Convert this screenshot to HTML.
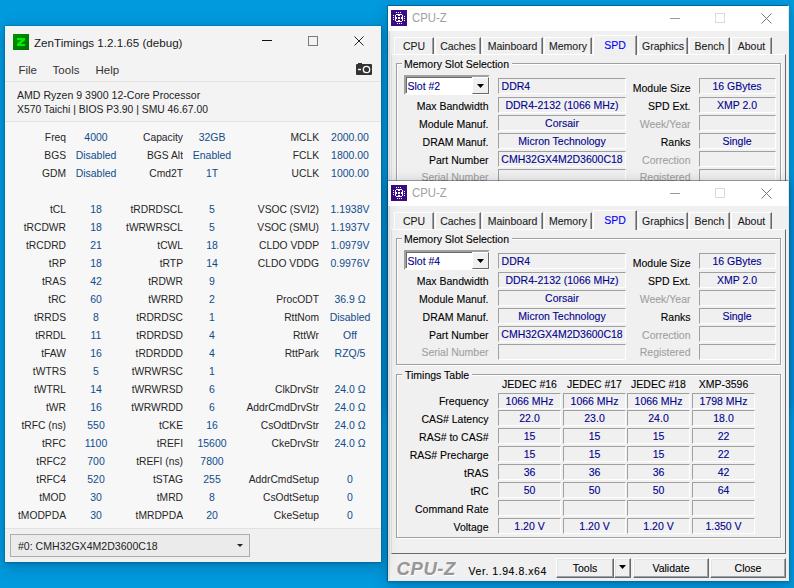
<!DOCTYPE html>
<html><head><meta charset="utf-8"><style>
html,body{margin:0;padding:0;}
body{width:794px;height:588px;overflow:hidden;position:relative;background:#009add;font-family:"Liberation Sans",sans-serif;}
.t{position:absolute;white-space:nowrap;line-height:14px;}
.r{position:absolute;}
.win{position:absolute;overflow:hidden;}
.win .t{-webkit-text-stroke:0.1px currentColor;}
.zt{position:absolute;}
</style></head><body>
<div class="r" style="left:388px;top:6px;width:401px;height:399px;box-shadow:0 4px 14px 1px rgba(0,30,70,0.26);"></div>
<div class="win" style="left:388px;top:5px;width:401px;height:176px;">
<div class="r" style="left:0px;top:0px;width:401px;height:401px;background:#f0f0f0;border-style:solid;border-width:1px 1px 1px 0;border-color:rgba(0,0,0,0.3) #e8e8e8 #e8e8e8 #e8e8e8;box-sizing:border-box;background-clip:padding-box;box-shadow:inset 1px 0 #e6e6e6, inset 2px 0 #dedede;"></div>
<div class="r" style="left:0px;top:1px;width:400px;height:25px;background:#fff;"></div>
<div class="r" style="left:3px;top:5px;width:16px;height:16px;background:#3b0f7e;"></div>
<svg class="r" style="left:3px;top:5px" width="16" height="16" shape-rendering="crispEdges"><rect width="16" height="16" fill="#3a0b82"/><g fill="#fff"><rect x="5" y="2" width="1" height="1"/><rect x="7" y="2" width="1" height="1"/><rect x="9" y="2" width="1" height="1"/><rect x="6" y="13" width="1" height="1"/><rect x="8" y="13" width="1" height="1"/><rect x="10" y="13" width="1" height="1"/><rect x="2" y="5" width="1" height="1"/><rect x="2" y="7" width="1" height="1"/><rect x="2" y="9" width="1" height="1"/><rect x="13" y="6" width="1" height="1"/><rect x="13" y="8" width="1" height="1"/><rect x="13" y="10" width="1" height="1"/><rect x="5" y="4" width="6" height="8"/><rect x="4" y="5" width="8" height="6"/></g><rect x="5" y="5" width="6" height="6" fill="#3a0b82"/><g fill="#fff"><rect x="7" y="5" width="2" height="1"/><rect x="7" y="10" width="2" height="1"/><rect x="5" y="7" width="1" height="2"/><rect x="10" y="7" width="1" height="2"/><rect x="7" y="7" width="2" height="2"/></g></svg>
<div class="t" style="left:24.30px;top:5.77px;font-size:12.2px;color:#a0a0a0;-webkit-text-stroke:0;transform:scaleX(0.93);transform-origin:0 50%;">CPU-Z</div>
<div class="r" style="left:282px;top:13px;width:10px;height:1px;background:#9a9a9a;"></div>
<div class="r" style="left:327px;top:8px;width:10px;height:10px;border:1px solid #dadada;box-sizing:border-box;"></div>
<svg class="r" style="left:373px;top:8px" width="11" height="11"><path d="M0.5 0.5L10.5 10.5M10.5 0.5L0.5 10.5" stroke="#777" stroke-width="1"/></svg>
<div class="r" style="left:3px;top:49px;width:395px;height:325px;border-style:solid;border-width:1px;border-color:#fff #696969 #696969 #e0e0e0;box-sizing:border-box;"></div>
<div class="r" style="left:6px;top:32px;width:40px;height:17px;background:#f0f0f0;border-style:solid;border-width:1px 1px 0 1px;border-color:#fff #696969 #fff #fff;box-sizing:border-box;box-shadow:inset -1px 0 0 #a0a0a0;"></div>
<div class="t" style="left:-4.00px;width:60px;text-align:center;top:34.36px;font-size:10.5px;color:#1c1c1c;">CPU</div>
<div class="r" style="left:47px;top:32px;width:46px;height:17px;background:#f0f0f0;border-style:solid;border-width:1px 1px 0 1px;border-color:#fff #696969 #fff #fff;box-sizing:border-box;box-shadow:inset -1px 0 0 #a0a0a0;"></div>
<div class="t" style="left:40.00px;width:60px;text-align:center;top:34.36px;font-size:10.5px;color:#1c1c1c;">Caches</div>
<div class="r" style="left:94px;top:32px;width:61px;height:17px;background:#f0f0f0;border-style:solid;border-width:1px 1px 0 1px;border-color:#fff #696969 #fff #fff;box-sizing:border-box;box-shadow:inset -1px 0 0 #a0a0a0;"></div>
<div class="t" style="left:94.50px;width:60px;text-align:center;top:34.36px;font-size:10.5px;color:#1c1c1c;">Mainboard</div>
<div class="r" style="left:156px;top:32px;width:48px;height:17px;background:#f0f0f0;border-style:solid;border-width:1px 1px 0 1px;border-color:#fff #696969 #fff #fff;box-sizing:border-box;box-shadow:inset -1px 0 0 #a0a0a0;"></div>
<div class="t" style="left:150.00px;width:60px;text-align:center;top:34.36px;font-size:10.5px;color:#1c1c1c;">Memory</div>
<div class="r" style="left:205px;top:30px;width:44px;height:20px;background:#f0f0f0;border-style:solid;border-width:1px 1px 0 1px;border-color:#fff #696969 #fff #fff;box-sizing:border-box;box-shadow:inset -1px 0 0 #a0a0a0;"></div>
<div class="t" style="left:197.00px;width:60px;text-align:center;top:33.36px;font-size:10.5px;color:#0000ff;">SPD</div>
<div class="r" style="left:250px;top:32px;width:50px;height:17px;background:#f0f0f0;border-style:solid;border-width:1px 1px 0 1px;border-color:#fff #696969 #fff #fff;box-sizing:border-box;box-shadow:inset -1px 0 0 #a0a0a0;"></div>
<div class="t" style="left:245.00px;width:60px;text-align:center;top:34.36px;font-size:10.5px;color:#1c1c1c;">Graphics</div>
<div class="r" style="left:301px;top:32px;width:41px;height:17px;background:#f0f0f0;border-style:solid;border-width:1px 1px 0 1px;border-color:#fff #696969 #fff #fff;box-sizing:border-box;box-shadow:inset -1px 0 0 #a0a0a0;"></div>
<div class="t" style="left:291.50px;width:60px;text-align:center;top:34.36px;font-size:10.5px;color:#1c1c1c;">Bench</div>
<div class="r" style="left:343px;top:32px;width:41px;height:17px;background:#f0f0f0;border-style:solid;border-width:1px 1px 0 1px;border-color:#fff #696969 #fff #fff;box-sizing:border-box;box-shadow:inset -1px 0 0 #a0a0a0;"></div>
<div class="t" style="left:333.50px;width:60px;text-align:center;top:34.36px;font-size:10.5px;color:#1c1c1c;">About</div>
<div class="r" style="left:8px;top:58px;width:385px;height:127px;border:1px solid #a0a0a0;box-sizing:border-box;box-shadow:inset 1px 1px 0 #fff, 1px 1px 0 #fff;"></div>
<div class="r" style="left:14px;top:53px;width:110px;height:12px;background:#f0f0f0;"></div>
<div class="t" style="left:16.00px;top:51.86px;font-size:10.5px;color:#000;">Memory Slot Selection</div>
<div class="r" style="left:16px;top:70px;width:86px;height:20px;background:#fff;border-style:solid;border-width:2px;border-color:#a0a0a0 #fff #fff #a0a0a0;box-sizing:border-box;box-shadow:inset 1px 1px 0 #696969;"></div>
<div class="r" style="left:84px;top:72px;width:17px;height:17px;background:#f0f0f0;border-style:solid;border-width:1px;border-color:#fff #696969 #696969 #fff;box-sizing:border-box;"></div>
<svg class="r" style="left:89px;top:79px" width="8" height="5"><path d="M0 0H7L3.5 4Z" fill="#000"/></svg>
<div class="t" style="left:19.50px;top:74.36px;font-size:10.5px;color:#00008c;">Slot #2</div>
<div class="r" style="left:110px;top:73px;width:128px;height:16px;border-style:solid;border-width:1px;border-color:#a0a0a0 #fff #fff #a0a0a0;box-sizing:border-box;"></div>
<div class="r" style="left:311px;top:73px;width:77px;height:16px;border-style:solid;border-width:1px;border-color:#a0a0a0 #fff #fff #a0a0a0;box-sizing:border-box;"></div>
<div class="t" style="left:202.50px;width:100px;text-align:right;top:76.36px;font-size:10.5px;color:#000;">Module Size</div>
<div class="t" style="left:113.60px;top:74.36px;font-size:10.5px;color:#00008c;">DDR4</div>
<div class="t" style="left:311.00px;width:76px;text-align:center;top:74.36px;font-size:10.5px;color:#00008c;">16 GBytes</div>
<div class="r" style="left:110px;top:92px;width:128px;height:16px;border-style:solid;border-width:1px;border-color:#a0a0a0 #fff #fff #a0a0a0;box-sizing:border-box;"></div>
<div class="r" style="left:311px;top:92px;width:77px;height:16px;border-style:solid;border-width:1px;border-color:#a0a0a0 #fff #fff #a0a0a0;box-sizing:border-box;"></div>
<div class="t" style="left:0.50px;width:100px;text-align:right;top:94.36px;font-size:10.5px;color:#000;">Max Bandwidth</div>
<div class="t" style="left:202.50px;width:100px;text-align:right;top:94.36px;font-size:10.5px;color:#000;">SPD Ext.</div>
<div class="t" style="left:110.00px;width:128px;text-align:center;top:93.36px;font-size:10.5px;color:#00008c;">DDR4-2132 (1066 MHz)</div>
<div class="t" style="left:311.00px;width:76px;text-align:center;top:93.36px;font-size:10.5px;color:#00008c;">XMP 2.0</div>
<div class="r" style="left:110px;top:110px;width:128px;height:16px;border-style:solid;border-width:1px;border-color:#a0a0a0 #fff #fff #a0a0a0;box-sizing:border-box;"></div>
<div class="r" style="left:311px;top:110px;width:77px;height:16px;border-style:solid;border-width:1px;border-color:#a0a0a0 #fff #fff #a0a0a0;box-sizing:border-box;"></div>
<div class="t" style="left:0.50px;width:100px;text-align:right;top:112.36px;font-size:10.5px;color:#000;">Module Manuf.</div>
<div class="t" style="left:202.50px;width:100px;text-align:right;top:112.36px;font-size:10.5px;color:#a0a0a0;">Week/Year</div>
<div class="t" style="left:110.00px;width:128px;text-align:center;top:111.36px;font-size:10.5px;color:#00008c;">Corsair</div>
<div class="r" style="left:110px;top:128px;width:128px;height:16px;border-style:solid;border-width:1px;border-color:#a0a0a0 #fff #fff #a0a0a0;box-sizing:border-box;"></div>
<div class="r" style="left:311px;top:128px;width:77px;height:16px;border-style:solid;border-width:1px;border-color:#a0a0a0 #fff #fff #a0a0a0;box-sizing:border-box;"></div>
<div class="t" style="left:0.50px;width:100px;text-align:right;top:130.36px;font-size:10.5px;color:#000;">DRAM Manuf.</div>
<div class="t" style="left:202.50px;width:100px;text-align:right;top:130.36px;font-size:10.5px;color:#000;">Ranks</div>
<div class="t" style="left:110.00px;width:128px;text-align:center;top:129.36px;font-size:10.5px;color:#00008c;">Micron Technology</div>
<div class="t" style="left:311.00px;width:76px;text-align:center;top:129.36px;font-size:10.5px;color:#00008c;">Single</div>
<div class="r" style="left:110px;top:146px;width:128px;height:16px;border-style:solid;border-width:1px;border-color:#a0a0a0 #fff #fff #a0a0a0;box-sizing:border-box;"></div>
<div class="r" style="left:311px;top:146px;width:77px;height:16px;border-style:solid;border-width:1px;border-color:#a0a0a0 #fff #fff #a0a0a0;box-sizing:border-box;"></div>
<div class="t" style="left:0.50px;width:100px;text-align:right;top:148.36px;font-size:10.5px;color:#000;">Part Number</div>
<div class="t" style="left:202.50px;width:100px;text-align:right;top:148.36px;font-size:10.5px;color:#a0a0a0;">Correction</div>
<div class="t" style="left:110.00px;width:128px;text-align:center;top:147.36px;font-size:10.5px;color:#00008c;">CMH32GX4M2D3600C18</div>
<div class="r" style="left:110px;top:164px;width:128px;height:16px;border-style:solid;border-width:1px;border-color:#a0a0a0 #fff #fff #a0a0a0;box-sizing:border-box;"></div>
<div class="r" style="left:311px;top:164px;width:77px;height:16px;border-style:solid;border-width:1px;border-color:#a0a0a0 #fff #fff #a0a0a0;box-sizing:border-box;"></div>
<div class="t" style="left:0.50px;width:100px;text-align:right;top:165.36px;font-size:10.5px;color:#a0a0a0;">Serial Number</div>
<div class="t" style="left:202.50px;width:100px;text-align:right;top:165.36px;font-size:10.5px;color:#a0a0a0;">Registered</div>
<div class="r" style="left:8px;top:194px;width:385px;height:164px;border:1px solid #a0a0a0;box-sizing:border-box;box-shadow:inset 1px 1px 0 #fff, 1px 1px 0 #fff;"></div>
<div class="r" style="left:14px;top:188px;width:70px;height:12px;background:#f0f0f0;"></div>
<div class="t" style="left:17.00px;top:187.96px;font-size:10.5px;color:#000;">Timings Table</div>
<div class="t" style="left:106.50px;width:70px;text-align:center;top:196.96px;font-size:10.5px;color:#000;">JEDEC #16</div>
<div class="t" style="left:171.50px;width:70px;text-align:center;top:196.96px;font-size:10.5px;color:#000;">JEDEC #17</div>
<div class="t" style="left:235.50px;width:70px;text-align:center;top:196.96px;font-size:10.5px;color:#000;">JEDEC #18</div>
<div class="t" style="left:300.50px;width:70px;text-align:center;top:196.96px;font-size:10.5px;color:#000;">XMP-3596</div>
<div class="t" style="left:0.50px;width:100px;text-align:right;top:214.36px;font-size:10.5px;color:#000;">Frequency</div>
<div class="r" style="left:110px;top:213px;width:63px;height:16px;border-style:solid;border-width:1px;border-color:#a0a0a0 #fff #fff #a0a0a0;box-sizing:border-box;"></div>
<div class="t" style="left:109.50px;width:64px;text-align:center;top:214.36px;font-size:10.5px;color:#00008c;">1066 MHz</div>
<div class="r" style="left:175px;top:213px;width:63px;height:16px;border-style:solid;border-width:1px;border-color:#a0a0a0 #fff #fff #a0a0a0;box-sizing:border-box;"></div>
<div class="t" style="left:174.50px;width:64px;text-align:center;top:214.36px;font-size:10.5px;color:#00008c;">1066 MHz</div>
<div class="r" style="left:239px;top:213px;width:63px;height:16px;border-style:solid;border-width:1px;border-color:#a0a0a0 #fff #fff #a0a0a0;box-sizing:border-box;"></div>
<div class="t" style="left:238.50px;width:64px;text-align:center;top:214.36px;font-size:10.5px;color:#00008c;">1066 MHz</div>
<div class="r" style="left:304px;top:213px;width:63px;height:16px;border-style:solid;border-width:1px;border-color:#a0a0a0 #fff #fff #a0a0a0;box-sizing:border-box;"></div>
<div class="t" style="left:303.50px;width:64px;text-align:center;top:214.36px;font-size:10.5px;color:#00008c;">1798 MHz</div>
<div class="t" style="left:0.50px;width:100px;text-align:right;top:232.36px;font-size:10.5px;color:#000;">CAS# Latency</div>
<div class="r" style="left:110px;top:230px;width:63px;height:16px;border-style:solid;border-width:1px;border-color:#a0a0a0 #fff #fff #a0a0a0;box-sizing:border-box;"></div>
<div class="t" style="left:109.50px;width:64px;text-align:center;top:231.36px;font-size:10.5px;color:#00008c;">22.0</div>
<div class="r" style="left:175px;top:230px;width:63px;height:16px;border-style:solid;border-width:1px;border-color:#a0a0a0 #fff #fff #a0a0a0;box-sizing:border-box;"></div>
<div class="t" style="left:174.50px;width:64px;text-align:center;top:231.36px;font-size:10.5px;color:#00008c;">23.0</div>
<div class="r" style="left:239px;top:230px;width:63px;height:16px;border-style:solid;border-width:1px;border-color:#a0a0a0 #fff #fff #a0a0a0;box-sizing:border-box;"></div>
<div class="t" style="left:238.50px;width:64px;text-align:center;top:231.36px;font-size:10.5px;color:#00008c;">24.0</div>
<div class="r" style="left:304px;top:230px;width:63px;height:16px;border-style:solid;border-width:1px;border-color:#a0a0a0 #fff #fff #a0a0a0;box-sizing:border-box;"></div>
<div class="t" style="left:303.50px;width:64px;text-align:center;top:231.36px;font-size:10.5px;color:#00008c;">18.0</div>
<div class="t" style="left:0.50px;width:100px;text-align:right;top:250.36px;font-size:10.5px;color:#000;">RAS# to CAS#</div>
<div class="r" style="left:110px;top:248px;width:63px;height:16px;border-style:solid;border-width:1px;border-color:#a0a0a0 #fff #fff #a0a0a0;box-sizing:border-box;"></div>
<div class="t" style="left:109.50px;width:64px;text-align:center;top:249.36px;font-size:10.5px;color:#00008c;">15</div>
<div class="r" style="left:175px;top:248px;width:63px;height:16px;border-style:solid;border-width:1px;border-color:#a0a0a0 #fff #fff #a0a0a0;box-sizing:border-box;"></div>
<div class="t" style="left:174.50px;width:64px;text-align:center;top:249.36px;font-size:10.5px;color:#00008c;">15</div>
<div class="r" style="left:239px;top:248px;width:63px;height:16px;border-style:solid;border-width:1px;border-color:#a0a0a0 #fff #fff #a0a0a0;box-sizing:border-box;"></div>
<div class="t" style="left:238.50px;width:64px;text-align:center;top:249.36px;font-size:10.5px;color:#00008c;">15</div>
<div class="r" style="left:304px;top:248px;width:63px;height:16px;border-style:solid;border-width:1px;border-color:#a0a0a0 #fff #fff #a0a0a0;box-sizing:border-box;"></div>
<div class="t" style="left:303.50px;width:64px;text-align:center;top:249.36px;font-size:10.5px;color:#00008c;">22</div>
<div class="t" style="left:0.50px;width:100px;text-align:right;top:268.36px;font-size:10.5px;color:#000;">RAS# Precharge</div>
<div class="r" style="left:110px;top:266px;width:63px;height:16px;border-style:solid;border-width:1px;border-color:#a0a0a0 #fff #fff #a0a0a0;box-sizing:border-box;"></div>
<div class="t" style="left:109.50px;width:64px;text-align:center;top:267.36px;font-size:10.5px;color:#00008c;">15</div>
<div class="r" style="left:175px;top:266px;width:63px;height:16px;border-style:solid;border-width:1px;border-color:#a0a0a0 #fff #fff #a0a0a0;box-sizing:border-box;"></div>
<div class="t" style="left:174.50px;width:64px;text-align:center;top:267.36px;font-size:10.5px;color:#00008c;">15</div>
<div class="r" style="left:239px;top:266px;width:63px;height:16px;border-style:solid;border-width:1px;border-color:#a0a0a0 #fff #fff #a0a0a0;box-sizing:border-box;"></div>
<div class="t" style="left:238.50px;width:64px;text-align:center;top:267.36px;font-size:10.5px;color:#00008c;">15</div>
<div class="r" style="left:304px;top:266px;width:63px;height:16px;border-style:solid;border-width:1px;border-color:#a0a0a0 #fff #fff #a0a0a0;box-sizing:border-box;"></div>
<div class="t" style="left:303.50px;width:64px;text-align:center;top:267.36px;font-size:10.5px;color:#00008c;">22</div>
<div class="t" style="left:0.50px;width:100px;text-align:right;top:286.36px;font-size:10.5px;color:#000;">tRAS</div>
<div class="r" style="left:110px;top:284px;width:63px;height:16px;border-style:solid;border-width:1px;border-color:#a0a0a0 #fff #fff #a0a0a0;box-sizing:border-box;"></div>
<div class="t" style="left:109.50px;width:64px;text-align:center;top:285.36px;font-size:10.5px;color:#00008c;">36</div>
<div class="r" style="left:175px;top:284px;width:63px;height:16px;border-style:solid;border-width:1px;border-color:#a0a0a0 #fff #fff #a0a0a0;box-sizing:border-box;"></div>
<div class="t" style="left:174.50px;width:64px;text-align:center;top:285.36px;font-size:10.5px;color:#00008c;">36</div>
<div class="r" style="left:239px;top:284px;width:63px;height:16px;border-style:solid;border-width:1px;border-color:#a0a0a0 #fff #fff #a0a0a0;box-sizing:border-box;"></div>
<div class="t" style="left:238.50px;width:64px;text-align:center;top:285.36px;font-size:10.5px;color:#00008c;">36</div>
<div class="r" style="left:304px;top:284px;width:63px;height:16px;border-style:solid;border-width:1px;border-color:#a0a0a0 #fff #fff #a0a0a0;box-sizing:border-box;"></div>
<div class="t" style="left:303.50px;width:64px;text-align:center;top:285.36px;font-size:10.5px;color:#00008c;">42</div>
<div class="t" style="left:0.50px;width:100px;text-align:right;top:304.36px;font-size:10.5px;color:#000;">tRC</div>
<div class="r" style="left:110px;top:302px;width:63px;height:16px;border-style:solid;border-width:1px;border-color:#a0a0a0 #fff #fff #a0a0a0;box-sizing:border-box;"></div>
<div class="t" style="left:109.50px;width:64px;text-align:center;top:303.36px;font-size:10.5px;color:#00008c;">50</div>
<div class="r" style="left:175px;top:302px;width:63px;height:16px;border-style:solid;border-width:1px;border-color:#a0a0a0 #fff #fff #a0a0a0;box-sizing:border-box;"></div>
<div class="t" style="left:174.50px;width:64px;text-align:center;top:303.36px;font-size:10.5px;color:#00008c;">50</div>
<div class="r" style="left:239px;top:302px;width:63px;height:16px;border-style:solid;border-width:1px;border-color:#a0a0a0 #fff #fff #a0a0a0;box-sizing:border-box;"></div>
<div class="t" style="left:238.50px;width:64px;text-align:center;top:303.36px;font-size:10.5px;color:#00008c;">50</div>
<div class="r" style="left:304px;top:302px;width:63px;height:16px;border-style:solid;border-width:1px;border-color:#a0a0a0 #fff #fff #a0a0a0;box-sizing:border-box;"></div>
<div class="t" style="left:303.50px;width:64px;text-align:center;top:303.36px;font-size:10.5px;color:#00008c;">64</div>
<div class="t" style="left:0.50px;width:100px;text-align:right;top:322.36px;font-size:10.5px;color:#000;">Command Rate</div>
<div class="r" style="left:110px;top:320px;width:63px;height:16px;border-style:solid;border-width:1px;border-color:#a0a0a0 #fff #fff #a0a0a0;box-sizing:border-box;"></div>
<div class="r" style="left:175px;top:320px;width:63px;height:16px;border-style:solid;border-width:1px;border-color:#a0a0a0 #fff #fff #a0a0a0;box-sizing:border-box;"></div>
<div class="r" style="left:239px;top:320px;width:63px;height:16px;border-style:solid;border-width:1px;border-color:#a0a0a0 #fff #fff #a0a0a0;box-sizing:border-box;"></div>
<div class="r" style="left:304px;top:320px;width:63px;height:16px;border-style:solid;border-width:1px;border-color:#a0a0a0 #fff #fff #a0a0a0;box-sizing:border-box;"></div>
<div class="t" style="left:0.50px;width:100px;text-align:right;top:340.36px;font-size:10.5px;color:#000;">Voltage</div>
<div class="r" style="left:110px;top:338px;width:63px;height:16px;border-style:solid;border-width:1px;border-color:#a0a0a0 #fff #fff #a0a0a0;box-sizing:border-box;"></div>
<div class="t" style="left:109.50px;width:64px;text-align:center;top:339.36px;font-size:10.5px;color:#00008c;">1.20 V</div>
<div class="r" style="left:175px;top:338px;width:63px;height:16px;border-style:solid;border-width:1px;border-color:#a0a0a0 #fff #fff #a0a0a0;box-sizing:border-box;"></div>
<div class="t" style="left:174.50px;width:64px;text-align:center;top:339.36px;font-size:10.5px;color:#00008c;">1.20 V</div>
<div class="r" style="left:239px;top:338px;width:63px;height:16px;border-style:solid;border-width:1px;border-color:#a0a0a0 #fff #fff #a0a0a0;box-sizing:border-box;"></div>
<div class="t" style="left:238.50px;width:64px;text-align:center;top:339.36px;font-size:10.5px;color:#00008c;">1.20 V</div>
<div class="r" style="left:304px;top:338px;width:63px;height:16px;border-style:solid;border-width:1px;border-color:#a0a0a0 #fff #fff #a0a0a0;box-sizing:border-box;"></div>
<div class="t" style="left:303.50px;width:64px;text-align:center;top:339.36px;font-size:10.5px;color:#00008c;">1.350 V</div>
<div class="t" style="left:8.50px;top:381.59px;font-size:18.5px;color:#979797;letter-spacing:0.6px;text-shadow:1px 1px 0 #fff;"><i><b>CPU-Z</b></i></div>
<div class="t" style="left:80.60px;top:384.16px;font-size:10.5px;color:#000;letter-spacing:0.55px;">Ver. 1.94.8.x64</div>
<div class="r" style="left:168px;top:378px;width:58px;height:20px;background:#f0f0f0;border-style:solid;border-width:1px;border-color:#fff #696969 #696969 #fff;box-sizing:border-box;box-shadow:inset -1px -1px 0 #a0a0a0, inset 1px 1px 0 #e3e3e3;"></div>
<div class="r" style="left:226px;top:378px;width:17px;height:20px;background:#f0f0f0;border-style:solid;border-width:1px;border-color:#fff #696969 #696969 #fff;box-sizing:border-box;box-shadow:inset -1px -1px 0 #a0a0a0, inset 1px 1px 0 #e3e3e3;"></div>
<svg class="r" style="left:231px;top:385px" width="8" height="5"><path d="M0 0H7L3.5 4Z" fill="#000"/></svg>
<div class="t" style="left:167.00px;width:60px;text-align:center;top:381.36px;font-size:10.5px;color:#000;">Tools</div>
<div class="r" style="left:245px;top:378px;width:76px;height:20px;background:#f0f0f0;border-style:solid;border-width:1px;border-color:#fff #696969 #696969 #fff;box-sizing:border-box;box-shadow:inset -1px -1px 0 #a0a0a0, inset 1px 1px 0 #e3e3e3;"></div>
<div class="t" style="left:245.00px;width:76px;text-align:center;top:381.36px;font-size:10.5px;color:#000;">Validate</div>
<div class="r" style="left:322px;top:378px;width:76px;height:20px;background:#f0f0f0;border-style:solid;border-width:1px;border-color:#fff #696969 #696969 #fff;box-sizing:border-box;box-shadow:inset -1px -1px 0 #a0a0a0, inset 1px 1px 0 #e3e3e3;"></div>
<div class="t" style="left:322.00px;width:76px;text-align:center;top:381.36px;font-size:10.5px;color:#000;">Close</div>
</div>
<div class="r" style="left:388px;top:181px;width:401px;height:400px;box-shadow:0 4px 14px 1px rgba(0,30,70,0.26), 0 1px 3px rgba(0,20,50,0.25);"></div>
<div class="win" style="left:388px;top:180px;width:401px;height:401px;">
<div class="r" style="left:0px;top:0px;width:401px;height:401px;background:#f0f0f0;border-style:solid;border-width:1px 1px 1px 0;border-color:rgba(0,0,0,0.3) #e8e8e8 #e8e8e8 #e8e8e8;box-sizing:border-box;background-clip:padding-box;box-shadow:inset 1px 0 #e6e6e6, inset 2px 0 #dedede;"></div>
<div class="r" style="left:0px;top:1px;width:400px;height:25px;background:#fff;"></div>
<div class="r" style="left:3px;top:5px;width:16px;height:16px;background:#3b0f7e;"></div>
<svg class="r" style="left:3px;top:5px" width="16" height="16" shape-rendering="crispEdges"><rect width="16" height="16" fill="#3a0b82"/><g fill="#fff"><rect x="5" y="2" width="1" height="1"/><rect x="7" y="2" width="1" height="1"/><rect x="9" y="2" width="1" height="1"/><rect x="6" y="13" width="1" height="1"/><rect x="8" y="13" width="1" height="1"/><rect x="10" y="13" width="1" height="1"/><rect x="2" y="5" width="1" height="1"/><rect x="2" y="7" width="1" height="1"/><rect x="2" y="9" width="1" height="1"/><rect x="13" y="6" width="1" height="1"/><rect x="13" y="8" width="1" height="1"/><rect x="13" y="10" width="1" height="1"/><rect x="5" y="4" width="6" height="8"/><rect x="4" y="5" width="8" height="6"/></g><rect x="5" y="5" width="6" height="6" fill="#3a0b82"/><g fill="#fff"><rect x="7" y="5" width="2" height="1"/><rect x="7" y="10" width="2" height="1"/><rect x="5" y="7" width="1" height="2"/><rect x="10" y="7" width="1" height="2"/><rect x="7" y="7" width="2" height="2"/></g></svg>
<div class="t" style="left:24.30px;top:5.77px;font-size:12.2px;color:#a0a0a0;-webkit-text-stroke:0;transform:scaleX(0.93);transform-origin:0 50%;">CPU-Z</div>
<div class="r" style="left:282px;top:13px;width:10px;height:1px;background:#9a9a9a;"></div>
<div class="r" style="left:327px;top:8px;width:10px;height:10px;border:1px solid #dadada;box-sizing:border-box;"></div>
<svg class="r" style="left:373px;top:8px" width="11" height="11"><path d="M0.5 0.5L10.5 10.5M10.5 0.5L0.5 10.5" stroke="#777" stroke-width="1"/></svg>
<div class="r" style="left:3px;top:49px;width:395px;height:325px;border-style:solid;border-width:1px;border-color:#fff #696969 #696969 #e0e0e0;box-sizing:border-box;"></div>
<div class="r" style="left:6px;top:32px;width:40px;height:17px;background:#f0f0f0;border-style:solid;border-width:1px 1px 0 1px;border-color:#fff #696969 #fff #fff;box-sizing:border-box;box-shadow:inset -1px 0 0 #a0a0a0;"></div>
<div class="t" style="left:-4.00px;width:60px;text-align:center;top:34.36px;font-size:10.5px;color:#1c1c1c;">CPU</div>
<div class="r" style="left:47px;top:32px;width:46px;height:17px;background:#f0f0f0;border-style:solid;border-width:1px 1px 0 1px;border-color:#fff #696969 #fff #fff;box-sizing:border-box;box-shadow:inset -1px 0 0 #a0a0a0;"></div>
<div class="t" style="left:40.00px;width:60px;text-align:center;top:34.36px;font-size:10.5px;color:#1c1c1c;">Caches</div>
<div class="r" style="left:94px;top:32px;width:61px;height:17px;background:#f0f0f0;border-style:solid;border-width:1px 1px 0 1px;border-color:#fff #696969 #fff #fff;box-sizing:border-box;box-shadow:inset -1px 0 0 #a0a0a0;"></div>
<div class="t" style="left:94.50px;width:60px;text-align:center;top:34.36px;font-size:10.5px;color:#1c1c1c;">Mainboard</div>
<div class="r" style="left:156px;top:32px;width:48px;height:17px;background:#f0f0f0;border-style:solid;border-width:1px 1px 0 1px;border-color:#fff #696969 #fff #fff;box-sizing:border-box;box-shadow:inset -1px 0 0 #a0a0a0;"></div>
<div class="t" style="left:150.00px;width:60px;text-align:center;top:34.36px;font-size:10.5px;color:#1c1c1c;">Memory</div>
<div class="r" style="left:205px;top:30px;width:44px;height:20px;background:#f0f0f0;border-style:solid;border-width:1px 1px 0 1px;border-color:#fff #696969 #fff #fff;box-sizing:border-box;box-shadow:inset -1px 0 0 #a0a0a0;"></div>
<div class="t" style="left:197.00px;width:60px;text-align:center;top:33.36px;font-size:10.5px;color:#0000ff;">SPD</div>
<div class="r" style="left:250px;top:32px;width:50px;height:17px;background:#f0f0f0;border-style:solid;border-width:1px 1px 0 1px;border-color:#fff #696969 #fff #fff;box-sizing:border-box;box-shadow:inset -1px 0 0 #a0a0a0;"></div>
<div class="t" style="left:245.00px;width:60px;text-align:center;top:34.36px;font-size:10.5px;color:#1c1c1c;">Graphics</div>
<div class="r" style="left:301px;top:32px;width:41px;height:17px;background:#f0f0f0;border-style:solid;border-width:1px 1px 0 1px;border-color:#fff #696969 #fff #fff;box-sizing:border-box;box-shadow:inset -1px 0 0 #a0a0a0;"></div>
<div class="t" style="left:291.50px;width:60px;text-align:center;top:34.36px;font-size:10.5px;color:#1c1c1c;">Bench</div>
<div class="r" style="left:343px;top:32px;width:41px;height:17px;background:#f0f0f0;border-style:solid;border-width:1px 1px 0 1px;border-color:#fff #696969 #fff #fff;box-sizing:border-box;box-shadow:inset -1px 0 0 #a0a0a0;"></div>
<div class="t" style="left:333.50px;width:60px;text-align:center;top:34.36px;font-size:10.5px;color:#1c1c1c;">About</div>
<div class="r" style="left:8px;top:58px;width:385px;height:127px;border:1px solid #a0a0a0;box-sizing:border-box;box-shadow:inset 1px 1px 0 #fff, 1px 1px 0 #fff;"></div>
<div class="r" style="left:14px;top:53px;width:110px;height:12px;background:#f0f0f0;"></div>
<div class="t" style="left:16.00px;top:51.86px;font-size:10.5px;color:#000;">Memory Slot Selection</div>
<div class="r" style="left:16px;top:70px;width:86px;height:20px;background:#fff;border-style:solid;border-width:2px;border-color:#a0a0a0 #fff #fff #a0a0a0;box-sizing:border-box;box-shadow:inset 1px 1px 0 #696969;"></div>
<div class="r" style="left:84px;top:72px;width:17px;height:17px;background:#f0f0f0;border-style:solid;border-width:1px;border-color:#fff #696969 #696969 #fff;box-sizing:border-box;"></div>
<svg class="r" style="left:89px;top:79px" width="8" height="5"><path d="M0 0H7L3.5 4Z" fill="#000"/></svg>
<div class="t" style="left:19.50px;top:74.36px;font-size:10.5px;color:#00008c;">Slot #4</div>
<div class="r" style="left:110px;top:73px;width:128px;height:16px;border-style:solid;border-width:1px;border-color:#a0a0a0 #fff #fff #a0a0a0;box-sizing:border-box;"></div>
<div class="r" style="left:311px;top:73px;width:77px;height:16px;border-style:solid;border-width:1px;border-color:#a0a0a0 #fff #fff #a0a0a0;box-sizing:border-box;"></div>
<div class="t" style="left:202.50px;width:100px;text-align:right;top:76.36px;font-size:10.5px;color:#000;">Module Size</div>
<div class="t" style="left:113.60px;top:74.36px;font-size:10.5px;color:#00008c;">DDR4</div>
<div class="t" style="left:311.00px;width:76px;text-align:center;top:74.36px;font-size:10.5px;color:#00008c;">16 GBytes</div>
<div class="r" style="left:110px;top:92px;width:128px;height:16px;border-style:solid;border-width:1px;border-color:#a0a0a0 #fff #fff #a0a0a0;box-sizing:border-box;"></div>
<div class="r" style="left:311px;top:92px;width:77px;height:16px;border-style:solid;border-width:1px;border-color:#a0a0a0 #fff #fff #a0a0a0;box-sizing:border-box;"></div>
<div class="t" style="left:0.50px;width:100px;text-align:right;top:94.36px;font-size:10.5px;color:#000;">Max Bandwidth</div>
<div class="t" style="left:202.50px;width:100px;text-align:right;top:94.36px;font-size:10.5px;color:#000;">SPD Ext.</div>
<div class="t" style="left:110.00px;width:128px;text-align:center;top:93.36px;font-size:10.5px;color:#00008c;">DDR4-2132 (1066 MHz)</div>
<div class="t" style="left:311.00px;width:76px;text-align:center;top:93.36px;font-size:10.5px;color:#00008c;">XMP 2.0</div>
<div class="r" style="left:110px;top:110px;width:128px;height:16px;border-style:solid;border-width:1px;border-color:#a0a0a0 #fff #fff #a0a0a0;box-sizing:border-box;"></div>
<div class="r" style="left:311px;top:110px;width:77px;height:16px;border-style:solid;border-width:1px;border-color:#a0a0a0 #fff #fff #a0a0a0;box-sizing:border-box;"></div>
<div class="t" style="left:0.50px;width:100px;text-align:right;top:112.36px;font-size:10.5px;color:#000;">Module Manuf.</div>
<div class="t" style="left:202.50px;width:100px;text-align:right;top:112.36px;font-size:10.5px;color:#a0a0a0;">Week/Year</div>
<div class="t" style="left:110.00px;width:128px;text-align:center;top:111.36px;font-size:10.5px;color:#00008c;">Corsair</div>
<div class="r" style="left:110px;top:128px;width:128px;height:16px;border-style:solid;border-width:1px;border-color:#a0a0a0 #fff #fff #a0a0a0;box-sizing:border-box;"></div>
<div class="r" style="left:311px;top:128px;width:77px;height:16px;border-style:solid;border-width:1px;border-color:#a0a0a0 #fff #fff #a0a0a0;box-sizing:border-box;"></div>
<div class="t" style="left:0.50px;width:100px;text-align:right;top:130.36px;font-size:10.5px;color:#000;">DRAM Manuf.</div>
<div class="t" style="left:202.50px;width:100px;text-align:right;top:130.36px;font-size:10.5px;color:#000;">Ranks</div>
<div class="t" style="left:110.00px;width:128px;text-align:center;top:129.36px;font-size:10.5px;color:#00008c;">Micron Technology</div>
<div class="t" style="left:311.00px;width:76px;text-align:center;top:129.36px;font-size:10.5px;color:#00008c;">Single</div>
<div class="r" style="left:110px;top:146px;width:128px;height:16px;border-style:solid;border-width:1px;border-color:#a0a0a0 #fff #fff #a0a0a0;box-sizing:border-box;"></div>
<div class="r" style="left:311px;top:146px;width:77px;height:16px;border-style:solid;border-width:1px;border-color:#a0a0a0 #fff #fff #a0a0a0;box-sizing:border-box;"></div>
<div class="t" style="left:0.50px;width:100px;text-align:right;top:148.36px;font-size:10.5px;color:#000;">Part Number</div>
<div class="t" style="left:202.50px;width:100px;text-align:right;top:148.36px;font-size:10.5px;color:#a0a0a0;">Correction</div>
<div class="t" style="left:110.00px;width:128px;text-align:center;top:147.36px;font-size:10.5px;color:#00008c;">CMH32GX4M2D3600C18</div>
<div class="r" style="left:110px;top:164px;width:128px;height:16px;border-style:solid;border-width:1px;border-color:#a0a0a0 #fff #fff #a0a0a0;box-sizing:border-box;"></div>
<div class="r" style="left:311px;top:164px;width:77px;height:16px;border-style:solid;border-width:1px;border-color:#a0a0a0 #fff #fff #a0a0a0;box-sizing:border-box;"></div>
<div class="t" style="left:0.50px;width:100px;text-align:right;top:165.36px;font-size:10.5px;color:#a0a0a0;">Serial Number</div>
<div class="t" style="left:202.50px;width:100px;text-align:right;top:165.36px;font-size:10.5px;color:#a0a0a0;">Registered</div>
<div class="r" style="left:8px;top:194px;width:385px;height:164px;border:1px solid #a0a0a0;box-sizing:border-box;box-shadow:inset 1px 1px 0 #fff, 1px 1px 0 #fff;"></div>
<div class="r" style="left:14px;top:188px;width:70px;height:12px;background:#f0f0f0;"></div>
<div class="t" style="left:17.00px;top:187.96px;font-size:10.5px;color:#000;">Timings Table</div>
<div class="t" style="left:106.50px;width:70px;text-align:center;top:196.96px;font-size:10.5px;color:#000;">JEDEC #16</div>
<div class="t" style="left:171.50px;width:70px;text-align:center;top:196.96px;font-size:10.5px;color:#000;">JEDEC #17</div>
<div class="t" style="left:235.50px;width:70px;text-align:center;top:196.96px;font-size:10.5px;color:#000;">JEDEC #18</div>
<div class="t" style="left:300.50px;width:70px;text-align:center;top:196.96px;font-size:10.5px;color:#000;">XMP-3596</div>
<div class="t" style="left:0.50px;width:100px;text-align:right;top:214.36px;font-size:10.5px;color:#000;">Frequency</div>
<div class="r" style="left:110px;top:213px;width:63px;height:16px;border-style:solid;border-width:1px;border-color:#a0a0a0 #fff #fff #a0a0a0;box-sizing:border-box;"></div>
<div class="t" style="left:109.50px;width:64px;text-align:center;top:214.36px;font-size:10.5px;color:#00008c;">1066 MHz</div>
<div class="r" style="left:175px;top:213px;width:63px;height:16px;border-style:solid;border-width:1px;border-color:#a0a0a0 #fff #fff #a0a0a0;box-sizing:border-box;"></div>
<div class="t" style="left:174.50px;width:64px;text-align:center;top:214.36px;font-size:10.5px;color:#00008c;">1066 MHz</div>
<div class="r" style="left:239px;top:213px;width:63px;height:16px;border-style:solid;border-width:1px;border-color:#a0a0a0 #fff #fff #a0a0a0;box-sizing:border-box;"></div>
<div class="t" style="left:238.50px;width:64px;text-align:center;top:214.36px;font-size:10.5px;color:#00008c;">1066 MHz</div>
<div class="r" style="left:304px;top:213px;width:63px;height:16px;border-style:solid;border-width:1px;border-color:#a0a0a0 #fff #fff #a0a0a0;box-sizing:border-box;"></div>
<div class="t" style="left:303.50px;width:64px;text-align:center;top:214.36px;font-size:10.5px;color:#00008c;">1798 MHz</div>
<div class="t" style="left:0.50px;width:100px;text-align:right;top:232.36px;font-size:10.5px;color:#000;">CAS# Latency</div>
<div class="r" style="left:110px;top:230px;width:63px;height:16px;border-style:solid;border-width:1px;border-color:#a0a0a0 #fff #fff #a0a0a0;box-sizing:border-box;"></div>
<div class="t" style="left:109.50px;width:64px;text-align:center;top:231.36px;font-size:10.5px;color:#00008c;">22.0</div>
<div class="r" style="left:175px;top:230px;width:63px;height:16px;border-style:solid;border-width:1px;border-color:#a0a0a0 #fff #fff #a0a0a0;box-sizing:border-box;"></div>
<div class="t" style="left:174.50px;width:64px;text-align:center;top:231.36px;font-size:10.5px;color:#00008c;">23.0</div>
<div class="r" style="left:239px;top:230px;width:63px;height:16px;border-style:solid;border-width:1px;border-color:#a0a0a0 #fff #fff #a0a0a0;box-sizing:border-box;"></div>
<div class="t" style="left:238.50px;width:64px;text-align:center;top:231.36px;font-size:10.5px;color:#00008c;">24.0</div>
<div class="r" style="left:304px;top:230px;width:63px;height:16px;border-style:solid;border-width:1px;border-color:#a0a0a0 #fff #fff #a0a0a0;box-sizing:border-box;"></div>
<div class="t" style="left:303.50px;width:64px;text-align:center;top:231.36px;font-size:10.5px;color:#00008c;">18.0</div>
<div class="t" style="left:0.50px;width:100px;text-align:right;top:250.36px;font-size:10.5px;color:#000;">RAS# to CAS#</div>
<div class="r" style="left:110px;top:248px;width:63px;height:16px;border-style:solid;border-width:1px;border-color:#a0a0a0 #fff #fff #a0a0a0;box-sizing:border-box;"></div>
<div class="t" style="left:109.50px;width:64px;text-align:center;top:249.36px;font-size:10.5px;color:#00008c;">15</div>
<div class="r" style="left:175px;top:248px;width:63px;height:16px;border-style:solid;border-width:1px;border-color:#a0a0a0 #fff #fff #a0a0a0;box-sizing:border-box;"></div>
<div class="t" style="left:174.50px;width:64px;text-align:center;top:249.36px;font-size:10.5px;color:#00008c;">15</div>
<div class="r" style="left:239px;top:248px;width:63px;height:16px;border-style:solid;border-width:1px;border-color:#a0a0a0 #fff #fff #a0a0a0;box-sizing:border-box;"></div>
<div class="t" style="left:238.50px;width:64px;text-align:center;top:249.36px;font-size:10.5px;color:#00008c;">15</div>
<div class="r" style="left:304px;top:248px;width:63px;height:16px;border-style:solid;border-width:1px;border-color:#a0a0a0 #fff #fff #a0a0a0;box-sizing:border-box;"></div>
<div class="t" style="left:303.50px;width:64px;text-align:center;top:249.36px;font-size:10.5px;color:#00008c;">22</div>
<div class="t" style="left:0.50px;width:100px;text-align:right;top:268.36px;font-size:10.5px;color:#000;">RAS# Precharge</div>
<div class="r" style="left:110px;top:266px;width:63px;height:16px;border-style:solid;border-width:1px;border-color:#a0a0a0 #fff #fff #a0a0a0;box-sizing:border-box;"></div>
<div class="t" style="left:109.50px;width:64px;text-align:center;top:267.36px;font-size:10.5px;color:#00008c;">15</div>
<div class="r" style="left:175px;top:266px;width:63px;height:16px;border-style:solid;border-width:1px;border-color:#a0a0a0 #fff #fff #a0a0a0;box-sizing:border-box;"></div>
<div class="t" style="left:174.50px;width:64px;text-align:center;top:267.36px;font-size:10.5px;color:#00008c;">15</div>
<div class="r" style="left:239px;top:266px;width:63px;height:16px;border-style:solid;border-width:1px;border-color:#a0a0a0 #fff #fff #a0a0a0;box-sizing:border-box;"></div>
<div class="t" style="left:238.50px;width:64px;text-align:center;top:267.36px;font-size:10.5px;color:#00008c;">15</div>
<div class="r" style="left:304px;top:266px;width:63px;height:16px;border-style:solid;border-width:1px;border-color:#a0a0a0 #fff #fff #a0a0a0;box-sizing:border-box;"></div>
<div class="t" style="left:303.50px;width:64px;text-align:center;top:267.36px;font-size:10.5px;color:#00008c;">22</div>
<div class="t" style="left:0.50px;width:100px;text-align:right;top:286.36px;font-size:10.5px;color:#000;">tRAS</div>
<div class="r" style="left:110px;top:284px;width:63px;height:16px;border-style:solid;border-width:1px;border-color:#a0a0a0 #fff #fff #a0a0a0;box-sizing:border-box;"></div>
<div class="t" style="left:109.50px;width:64px;text-align:center;top:285.36px;font-size:10.5px;color:#00008c;">36</div>
<div class="r" style="left:175px;top:284px;width:63px;height:16px;border-style:solid;border-width:1px;border-color:#a0a0a0 #fff #fff #a0a0a0;box-sizing:border-box;"></div>
<div class="t" style="left:174.50px;width:64px;text-align:center;top:285.36px;font-size:10.5px;color:#00008c;">36</div>
<div class="r" style="left:239px;top:284px;width:63px;height:16px;border-style:solid;border-width:1px;border-color:#a0a0a0 #fff #fff #a0a0a0;box-sizing:border-box;"></div>
<div class="t" style="left:238.50px;width:64px;text-align:center;top:285.36px;font-size:10.5px;color:#00008c;">36</div>
<div class="r" style="left:304px;top:284px;width:63px;height:16px;border-style:solid;border-width:1px;border-color:#a0a0a0 #fff #fff #a0a0a0;box-sizing:border-box;"></div>
<div class="t" style="left:303.50px;width:64px;text-align:center;top:285.36px;font-size:10.5px;color:#00008c;">42</div>
<div class="t" style="left:0.50px;width:100px;text-align:right;top:304.36px;font-size:10.5px;color:#000;">tRC</div>
<div class="r" style="left:110px;top:302px;width:63px;height:16px;border-style:solid;border-width:1px;border-color:#a0a0a0 #fff #fff #a0a0a0;box-sizing:border-box;"></div>
<div class="t" style="left:109.50px;width:64px;text-align:center;top:303.36px;font-size:10.5px;color:#00008c;">50</div>
<div class="r" style="left:175px;top:302px;width:63px;height:16px;border-style:solid;border-width:1px;border-color:#a0a0a0 #fff #fff #a0a0a0;box-sizing:border-box;"></div>
<div class="t" style="left:174.50px;width:64px;text-align:center;top:303.36px;font-size:10.5px;color:#00008c;">50</div>
<div class="r" style="left:239px;top:302px;width:63px;height:16px;border-style:solid;border-width:1px;border-color:#a0a0a0 #fff #fff #a0a0a0;box-sizing:border-box;"></div>
<div class="t" style="left:238.50px;width:64px;text-align:center;top:303.36px;font-size:10.5px;color:#00008c;">50</div>
<div class="r" style="left:304px;top:302px;width:63px;height:16px;border-style:solid;border-width:1px;border-color:#a0a0a0 #fff #fff #a0a0a0;box-sizing:border-box;"></div>
<div class="t" style="left:303.50px;width:64px;text-align:center;top:303.36px;font-size:10.5px;color:#00008c;">64</div>
<div class="t" style="left:0.50px;width:100px;text-align:right;top:322.36px;font-size:10.5px;color:#000;">Command Rate</div>
<div class="r" style="left:110px;top:320px;width:63px;height:16px;border-style:solid;border-width:1px;border-color:#a0a0a0 #fff #fff #a0a0a0;box-sizing:border-box;"></div>
<div class="r" style="left:175px;top:320px;width:63px;height:16px;border-style:solid;border-width:1px;border-color:#a0a0a0 #fff #fff #a0a0a0;box-sizing:border-box;"></div>
<div class="r" style="left:239px;top:320px;width:63px;height:16px;border-style:solid;border-width:1px;border-color:#a0a0a0 #fff #fff #a0a0a0;box-sizing:border-box;"></div>
<div class="r" style="left:304px;top:320px;width:63px;height:16px;border-style:solid;border-width:1px;border-color:#a0a0a0 #fff #fff #a0a0a0;box-sizing:border-box;"></div>
<div class="t" style="left:0.50px;width:100px;text-align:right;top:340.36px;font-size:10.5px;color:#000;">Voltage</div>
<div class="r" style="left:110px;top:338px;width:63px;height:16px;border-style:solid;border-width:1px;border-color:#a0a0a0 #fff #fff #a0a0a0;box-sizing:border-box;"></div>
<div class="t" style="left:109.50px;width:64px;text-align:center;top:339.36px;font-size:10.5px;color:#00008c;">1.20 V</div>
<div class="r" style="left:175px;top:338px;width:63px;height:16px;border-style:solid;border-width:1px;border-color:#a0a0a0 #fff #fff #a0a0a0;box-sizing:border-box;"></div>
<div class="t" style="left:174.50px;width:64px;text-align:center;top:339.36px;font-size:10.5px;color:#00008c;">1.20 V</div>
<div class="r" style="left:239px;top:338px;width:63px;height:16px;border-style:solid;border-width:1px;border-color:#a0a0a0 #fff #fff #a0a0a0;box-sizing:border-box;"></div>
<div class="t" style="left:238.50px;width:64px;text-align:center;top:339.36px;font-size:10.5px;color:#00008c;">1.20 V</div>
<div class="r" style="left:304px;top:338px;width:63px;height:16px;border-style:solid;border-width:1px;border-color:#a0a0a0 #fff #fff #a0a0a0;box-sizing:border-box;"></div>
<div class="t" style="left:303.50px;width:64px;text-align:center;top:339.36px;font-size:10.5px;color:#00008c;">1.350 V</div>
<div class="t" style="left:8.50px;top:381.59px;font-size:18.5px;color:#979797;letter-spacing:0.6px;text-shadow:1px 1px 0 #fff;"><i><b>CPU-Z</b></i></div>
<div class="t" style="left:80.60px;top:384.16px;font-size:10.5px;color:#000;letter-spacing:0.55px;">Ver. 1.94.8.x64</div>
<div class="r" style="left:168px;top:378px;width:58px;height:20px;background:#f0f0f0;border-style:solid;border-width:1px;border-color:#fff #696969 #696969 #fff;box-sizing:border-box;box-shadow:inset -1px -1px 0 #a0a0a0, inset 1px 1px 0 #e3e3e3;"></div>
<div class="r" style="left:226px;top:378px;width:17px;height:20px;background:#f0f0f0;border-style:solid;border-width:1px;border-color:#fff #696969 #696969 #fff;box-sizing:border-box;box-shadow:inset -1px -1px 0 #a0a0a0, inset 1px 1px 0 #e3e3e3;"></div>
<svg class="r" style="left:231px;top:385px" width="8" height="5"><path d="M0 0H7L3.5 4Z" fill="#000"/></svg>
<div class="t" style="left:167.00px;width:60px;text-align:center;top:381.36px;font-size:10.5px;color:#000;">Tools</div>
<div class="r" style="left:245px;top:378px;width:76px;height:20px;background:#f0f0f0;border-style:solid;border-width:1px;border-color:#fff #696969 #696969 #fff;box-sizing:border-box;box-shadow:inset -1px -1px 0 #a0a0a0, inset 1px 1px 0 #e3e3e3;"></div>
<div class="t" style="left:245.00px;width:76px;text-align:center;top:381.36px;font-size:10.5px;color:#000;">Validate</div>
<div class="r" style="left:322px;top:378px;width:76px;height:20px;background:#f0f0f0;border-style:solid;border-width:1px;border-color:#fff #696969 #696969 #fff;box-sizing:border-box;box-shadow:inset -1px -1px 0 #a0a0a0, inset 1px 1px 0 #e3e3e3;"></div>
<div class="t" style="left:322.00px;width:76px;text-align:center;top:381.36px;font-size:10.5px;color:#000;">Close</div>
</div>
<div class="r" style="left:387px;top:5px;width:1px;height:576px;background:rgba(0,20,40,0.3);"></div>
<div class="r" style="left:5px;top:26px;width:376px;height:536px;background:#f3f3f3;box-shadow:0 0 0 1px rgba(0,30,60,0.12), 0 4px 14px 1px rgba(0,30,70,0.26), 0 1px 3px rgba(0,20,50,0.2);"></div>
<div class="r" style="left:5px;top:122px;width:376px;height:406px;background:#f7f7f7;"></div>
<div class="r" style="left:5px;top:529px;width:376px;height:33px;background:#f0f0f0;"></div>
<div class="r" style="left:5px;top:81px;width:376px;height:1px;background:#e2e2e2;"></div>
<div class="r" style="left:5px;top:121px;width:376px;height:1px;background:#e2e2e2;"></div>
<div class="r" style="left:5px;top:528px;width:376px;height:1px;background:#e2e2e2;"></div>
<svg class="r" style="left:13px;top:34px" width="16" height="16"><defs><linearGradient id="zg" x1="0" y1="0" x2="1" y2="1"><stop offset="0" stop-color="#009400"/><stop offset="1" stop-color="#006e00"/></linearGradient></defs><rect width="16" height="16" fill="url(#zg)"/><path d="M4 4H12V6.2L7.6 10H12V12H4V9.8L8.4 6H4Z" fill="#00f000"/></svg>
<div class="t" style="left:34.00px;top:35.98px;font-size:11.6px;color:#1a1a1a;">ZenTimings 1.2.1.65 (debug)</div>
<div class="r" style="left:262px;top:40px;width:10px;height:1px;background:#111;"></div>
<div class="r" style="left:308px;top:36px;width:10px;height:10px;border:1px solid #7a7a7a;box-sizing:border-box;"></div>
<svg class="r" style="left:354px;top:36px" width="10" height="10"><path d="M0.5 0.5L9.5 9.5M9.5 0.5L0.5 9.5" stroke="#222" stroke-width="1"/></svg>
<div class="t" style="left:18.40px;top:63.01px;font-size:11.5px;color:#333;">File</div>
<div class="t" style="left:52.60px;top:63.01px;font-size:11.5px;color:#333;">Tools</div>
<div class="t" style="left:95.50px;top:63.01px;font-size:11.5px;color:#333;">Help</div>
<svg class="r" style="left:356px;top:62px" width="17" height="14"><rect x="2" y="1" width="4" height="2" fill="#333"/><rect x="0" y="2" width="16" height="11" rx="1" fill="#333"/><circle cx="10.5" cy="7.5" r="3.2" fill="none" stroke="#fff" stroke-width="1.3"/><rect x="2" y="6.8" width="3" height="1.4" fill="#fff"/></svg>
<div class="t" style="left:17.40px;top:88.36px;font-size:10.5px;color:#222;transform:scaleX(1.006);transform-origin:0 50%;">AMD Ryzen 9 3900 12-Core Processor</div>
<div class="t" style="left:17.40px;top:102.36px;font-size:10.5px;color:#222;transform:scaleX(0.985);transform-origin:0 50%;">X570 Taichi | BIOS P3.90 | SMU 46.67.00</div>
<div class="t" style="left:-54.50px;width:120px;text-align:right;top:130.19px;font-size:11px;color:#262626;transform:scaleX(0.935);transform-origin:100% 50%;">Freq</div>
<div class="t" style="left:56.20px;width:80px;text-align:center;top:130.19px;font-size:11px;color:#0f4c8c;transform:scaleX(0.95);transform-origin:50% 50%;">4000</div>
<div class="t" style="left:62.50px;width:120px;text-align:right;top:130.19px;font-size:11px;color:#262626;transform:scaleX(0.935);transform-origin:100% 50%;">Capacity</div>
<div class="t" style="left:172.40px;width:80px;text-align:center;top:130.19px;font-size:11px;color:#0f4c8c;transform:scaleX(0.95);transform-origin:50% 50%;">32GB</div>
<div class="t" style="left:199.00px;width:120px;text-align:right;top:130.19px;font-size:11px;color:#262626;transform:scaleX(0.935);transform-origin:100% 50%;">MCLK</div>
<div class="t" style="left:310.00px;width:80px;text-align:center;top:130.19px;font-size:11px;color:#0f4c8c;transform:scaleX(0.95);transform-origin:50% 50%;">2000.00</div>
<div class="t" style="left:-54.50px;width:120px;text-align:right;top:148.19px;font-size:11px;color:#262626;transform:scaleX(0.935);transform-origin:100% 50%;">BGS</div>
<div class="t" style="left:56.20px;width:80px;text-align:center;top:148.19px;font-size:11px;color:#0f4c8c;transform:scaleX(0.95);transform-origin:50% 50%;">Disabled</div>
<div class="t" style="left:62.50px;width:120px;text-align:right;top:148.19px;font-size:11px;color:#262626;transform:scaleX(0.935);transform-origin:100% 50%;">BGS Alt</div>
<div class="t" style="left:172.40px;width:80px;text-align:center;top:148.19px;font-size:11px;color:#0f4c8c;transform:scaleX(0.95);transform-origin:50% 50%;">Enabled</div>
<div class="t" style="left:199.00px;width:120px;text-align:right;top:148.19px;font-size:11px;color:#262626;transform:scaleX(0.935);transform-origin:100% 50%;">FCLK</div>
<div class="t" style="left:310.00px;width:80px;text-align:center;top:148.19px;font-size:11px;color:#0f4c8c;transform:scaleX(0.95);transform-origin:50% 50%;">1800.00</div>
<div class="t" style="left:-54.50px;width:120px;text-align:right;top:166.19px;font-size:11px;color:#262626;transform:scaleX(0.935);transform-origin:100% 50%;">GDM</div>
<div class="t" style="left:56.20px;width:80px;text-align:center;top:166.19px;font-size:11px;color:#0f4c8c;transform:scaleX(0.95);transform-origin:50% 50%;">Disabled</div>
<div class="t" style="left:62.50px;width:120px;text-align:right;top:166.19px;font-size:11px;color:#262626;transform:scaleX(0.935);transform-origin:100% 50%;">Cmd2T</div>
<div class="t" style="left:172.40px;width:80px;text-align:center;top:166.19px;font-size:11px;color:#0f4c8c;transform:scaleX(0.95);transform-origin:50% 50%;">1T</div>
<div class="t" style="left:199.00px;width:120px;text-align:right;top:166.19px;font-size:11px;color:#262626;transform:scaleX(0.935);transform-origin:100% 50%;">UCLK</div>
<div class="t" style="left:310.00px;width:80px;text-align:center;top:166.19px;font-size:11px;color:#0f4c8c;transform:scaleX(0.95);transform-origin:50% 50%;">1000.00</div>
<div class="t" style="left:-54.50px;width:120px;text-align:right;top:202.19px;font-size:11px;color:#262626;transform:scaleX(0.935);transform-origin:100% 50%;">tCL</div>
<div class="t" style="left:56.20px;width:80px;text-align:center;top:202.19px;font-size:11px;color:#0f4c8c;transform:scaleX(0.95);transform-origin:50% 50%;">18</div>
<div class="t" style="left:62.50px;width:120px;text-align:right;top:202.19px;font-size:11px;color:#262626;transform:scaleX(0.935);transform-origin:100% 50%;">tRDRDSCL</div>
<div class="t" style="left:172.40px;width:80px;text-align:center;top:202.19px;font-size:11px;color:#0f4c8c;transform:scaleX(0.95);transform-origin:50% 50%;">5</div>
<div class="t" style="left:199.00px;width:120px;text-align:right;top:202.19px;font-size:11px;color:#262626;transform:scaleX(0.935);transform-origin:100% 50%;">VSOC (SVI2)</div>
<div class="t" style="left:310.00px;width:80px;text-align:center;top:202.19px;font-size:11px;color:#0f4c8c;transform:scaleX(0.95);transform-origin:50% 50%;">1.1938V</div>
<div class="t" style="left:-54.50px;width:120px;text-align:right;top:220.19px;font-size:11px;color:#262626;transform:scaleX(0.935);transform-origin:100% 50%;">tRCDWR</div>
<div class="t" style="left:56.20px;width:80px;text-align:center;top:220.19px;font-size:11px;color:#0f4c8c;transform:scaleX(0.95);transform-origin:50% 50%;">18</div>
<div class="t" style="left:62.50px;width:120px;text-align:right;top:220.19px;font-size:11px;color:#262626;transform:scaleX(0.935);transform-origin:100% 50%;">tWRWRSCL</div>
<div class="t" style="left:172.40px;width:80px;text-align:center;top:220.19px;font-size:11px;color:#0f4c8c;transform:scaleX(0.95);transform-origin:50% 50%;">5</div>
<div class="t" style="left:199.00px;width:120px;text-align:right;top:220.19px;font-size:11px;color:#262626;transform:scaleX(0.935);transform-origin:100% 50%;">VSOC (SMU)</div>
<div class="t" style="left:310.00px;width:80px;text-align:center;top:220.19px;font-size:11px;color:#0f4c8c;transform:scaleX(0.95);transform-origin:50% 50%;">1.1937V</div>
<div class="t" style="left:-54.50px;width:120px;text-align:right;top:238.19px;font-size:11px;color:#262626;transform:scaleX(0.935);transform-origin:100% 50%;">tRCDRD</div>
<div class="t" style="left:56.20px;width:80px;text-align:center;top:238.19px;font-size:11px;color:#0f4c8c;transform:scaleX(0.95);transform-origin:50% 50%;">21</div>
<div class="t" style="left:62.50px;width:120px;text-align:right;top:238.19px;font-size:11px;color:#262626;transform:scaleX(0.935);transform-origin:100% 50%;">tCWL</div>
<div class="t" style="left:172.40px;width:80px;text-align:center;top:238.19px;font-size:11px;color:#0f4c8c;transform:scaleX(0.95);transform-origin:50% 50%;">18</div>
<div class="t" style="left:199.00px;width:120px;text-align:right;top:238.19px;font-size:11px;color:#262626;transform:scaleX(0.935);transform-origin:100% 50%;">CLDO VDDP</div>
<div class="t" style="left:310.00px;width:80px;text-align:center;top:238.19px;font-size:11px;color:#0f4c8c;transform:scaleX(0.95);transform-origin:50% 50%;">1.0979V</div>
<div class="t" style="left:-54.50px;width:120px;text-align:right;top:256.19px;font-size:11px;color:#262626;transform:scaleX(0.935);transform-origin:100% 50%;">tRP</div>
<div class="t" style="left:56.20px;width:80px;text-align:center;top:256.19px;font-size:11px;color:#0f4c8c;transform:scaleX(0.95);transform-origin:50% 50%;">18</div>
<div class="t" style="left:62.50px;width:120px;text-align:right;top:256.19px;font-size:11px;color:#262626;transform:scaleX(0.935);transform-origin:100% 50%;">tRTP</div>
<div class="t" style="left:172.40px;width:80px;text-align:center;top:256.19px;font-size:11px;color:#0f4c8c;transform:scaleX(0.95);transform-origin:50% 50%;">14</div>
<div class="t" style="left:199.00px;width:120px;text-align:right;top:256.19px;font-size:11px;color:#262626;transform:scaleX(0.935);transform-origin:100% 50%;">CLDO VDDG</div>
<div class="t" style="left:310.00px;width:80px;text-align:center;top:256.19px;font-size:11px;color:#0f4c8c;transform:scaleX(0.95);transform-origin:50% 50%;">0.9976V</div>
<div class="t" style="left:-54.50px;width:120px;text-align:right;top:274.19px;font-size:11px;color:#262626;transform:scaleX(0.935);transform-origin:100% 50%;">tRAS</div>
<div class="t" style="left:56.20px;width:80px;text-align:center;top:274.19px;font-size:11px;color:#0f4c8c;transform:scaleX(0.95);transform-origin:50% 50%;">42</div>
<div class="t" style="left:62.50px;width:120px;text-align:right;top:274.19px;font-size:11px;color:#262626;transform:scaleX(0.935);transform-origin:100% 50%;">tRDWR</div>
<div class="t" style="left:172.40px;width:80px;text-align:center;top:274.19px;font-size:11px;color:#0f4c8c;transform:scaleX(0.95);transform-origin:50% 50%;">9</div>
<div class="t" style="left:-54.50px;width:120px;text-align:right;top:292.19px;font-size:11px;color:#262626;transform:scaleX(0.935);transform-origin:100% 50%;">tRC</div>
<div class="t" style="left:56.20px;width:80px;text-align:center;top:292.19px;font-size:11px;color:#0f4c8c;transform:scaleX(0.95);transform-origin:50% 50%;">60</div>
<div class="t" style="left:62.50px;width:120px;text-align:right;top:292.19px;font-size:11px;color:#262626;transform:scaleX(0.935);transform-origin:100% 50%;">tWRRD</div>
<div class="t" style="left:172.40px;width:80px;text-align:center;top:292.19px;font-size:11px;color:#0f4c8c;transform:scaleX(0.95);transform-origin:50% 50%;">2</div>
<div class="t" style="left:199.00px;width:120px;text-align:right;top:292.19px;font-size:11px;color:#262626;transform:scaleX(0.935);transform-origin:100% 50%;">ProcODT</div>
<div class="t" style="left:310.00px;width:80px;text-align:center;top:292.19px;font-size:11px;color:#0f4c8c;transform:scaleX(0.95);transform-origin:50% 50%;">36.9 &Omega;</div>
<div class="t" style="left:-54.50px;width:120px;text-align:right;top:310.19px;font-size:11px;color:#262626;transform:scaleX(0.935);transform-origin:100% 50%;">tRRDS</div>
<div class="t" style="left:56.20px;width:80px;text-align:center;top:310.19px;font-size:11px;color:#0f4c8c;transform:scaleX(0.95);transform-origin:50% 50%;">8</div>
<div class="t" style="left:62.50px;width:120px;text-align:right;top:310.19px;font-size:11px;color:#262626;transform:scaleX(0.935);transform-origin:100% 50%;">tRDRDSC</div>
<div class="t" style="left:172.40px;width:80px;text-align:center;top:310.19px;font-size:11px;color:#0f4c8c;transform:scaleX(0.95);transform-origin:50% 50%;">1</div>
<div class="t" style="left:199.00px;width:120px;text-align:right;top:310.19px;font-size:11px;color:#262626;transform:scaleX(0.935);transform-origin:100% 50%;">RttNom</div>
<div class="t" style="left:310.00px;width:80px;text-align:center;top:310.19px;font-size:11px;color:#0f4c8c;transform:scaleX(0.95);transform-origin:50% 50%;">Disabled</div>
<div class="t" style="left:-54.50px;width:120px;text-align:right;top:328.19px;font-size:11px;color:#262626;transform:scaleX(0.935);transform-origin:100% 50%;">tRRDL</div>
<div class="t" style="left:56.20px;width:80px;text-align:center;top:328.19px;font-size:11px;color:#0f4c8c;transform:scaleX(0.95);transform-origin:50% 50%;">11</div>
<div class="t" style="left:62.50px;width:120px;text-align:right;top:328.19px;font-size:11px;color:#262626;transform:scaleX(0.935);transform-origin:100% 50%;">tRDRDSD</div>
<div class="t" style="left:172.40px;width:80px;text-align:center;top:328.19px;font-size:11px;color:#0f4c8c;transform:scaleX(0.95);transform-origin:50% 50%;">4</div>
<div class="t" style="left:199.00px;width:120px;text-align:right;top:328.19px;font-size:11px;color:#262626;transform:scaleX(0.935);transform-origin:100% 50%;">RttWr</div>
<div class="t" style="left:310.00px;width:80px;text-align:center;top:328.19px;font-size:11px;color:#0f4c8c;transform:scaleX(0.95);transform-origin:50% 50%;">Off</div>
<div class="t" style="left:-54.50px;width:120px;text-align:right;top:346.19px;font-size:11px;color:#262626;transform:scaleX(0.935);transform-origin:100% 50%;">tFAW</div>
<div class="t" style="left:56.20px;width:80px;text-align:center;top:346.19px;font-size:11px;color:#0f4c8c;transform:scaleX(0.95);transform-origin:50% 50%;">16</div>
<div class="t" style="left:62.50px;width:120px;text-align:right;top:346.19px;font-size:11px;color:#262626;transform:scaleX(0.935);transform-origin:100% 50%;">tRDRDDD</div>
<div class="t" style="left:172.40px;width:80px;text-align:center;top:346.19px;font-size:11px;color:#0f4c8c;transform:scaleX(0.95);transform-origin:50% 50%;">4</div>
<div class="t" style="left:199.00px;width:120px;text-align:right;top:346.19px;font-size:11px;color:#262626;transform:scaleX(0.935);transform-origin:100% 50%;">RttPark</div>
<div class="t" style="left:310.00px;width:80px;text-align:center;top:346.19px;font-size:11px;color:#0f4c8c;transform:scaleX(0.95);transform-origin:50% 50%;">RZQ/5</div>
<div class="t" style="left:-54.50px;width:120px;text-align:right;top:364.19px;font-size:11px;color:#262626;transform:scaleX(0.935);transform-origin:100% 50%;">tWTRS</div>
<div class="t" style="left:56.20px;width:80px;text-align:center;top:364.19px;font-size:11px;color:#0f4c8c;transform:scaleX(0.95);transform-origin:50% 50%;">5</div>
<div class="t" style="left:62.50px;width:120px;text-align:right;top:364.19px;font-size:11px;color:#262626;transform:scaleX(0.935);transform-origin:100% 50%;">tWRWRSC</div>
<div class="t" style="left:172.40px;width:80px;text-align:center;top:364.19px;font-size:11px;color:#0f4c8c;transform:scaleX(0.95);transform-origin:50% 50%;">1</div>
<div class="t" style="left:-54.50px;width:120px;text-align:right;top:382.19px;font-size:11px;color:#262626;transform:scaleX(0.935);transform-origin:100% 50%;">tWTRL</div>
<div class="t" style="left:56.20px;width:80px;text-align:center;top:382.19px;font-size:11px;color:#0f4c8c;transform:scaleX(0.95);transform-origin:50% 50%;">14</div>
<div class="t" style="left:62.50px;width:120px;text-align:right;top:382.19px;font-size:11px;color:#262626;transform:scaleX(0.935);transform-origin:100% 50%;">tWRWRSD</div>
<div class="t" style="left:172.40px;width:80px;text-align:center;top:382.19px;font-size:11px;color:#0f4c8c;transform:scaleX(0.95);transform-origin:50% 50%;">6</div>
<div class="t" style="left:199.00px;width:120px;text-align:right;top:382.19px;font-size:11px;color:#262626;transform:scaleX(0.935);transform-origin:100% 50%;">ClkDrvStr</div>
<div class="t" style="left:310.00px;width:80px;text-align:center;top:382.19px;font-size:11px;color:#0f4c8c;transform:scaleX(0.95);transform-origin:50% 50%;">24.0 &Omega;</div>
<div class="t" style="left:-54.50px;width:120px;text-align:right;top:400.19px;font-size:11px;color:#262626;transform:scaleX(0.935);transform-origin:100% 50%;">tWR</div>
<div class="t" style="left:56.20px;width:80px;text-align:center;top:400.19px;font-size:11px;color:#0f4c8c;transform:scaleX(0.95);transform-origin:50% 50%;">16</div>
<div class="t" style="left:62.50px;width:120px;text-align:right;top:400.19px;font-size:11px;color:#262626;transform:scaleX(0.935);transform-origin:100% 50%;">tWRWRDD</div>
<div class="t" style="left:172.40px;width:80px;text-align:center;top:400.19px;font-size:11px;color:#0f4c8c;transform:scaleX(0.95);transform-origin:50% 50%;">6</div>
<div class="t" style="left:199.00px;width:120px;text-align:right;top:400.19px;font-size:11px;color:#262626;transform:scaleX(0.935);transform-origin:100% 50%;">AddrCmdDrvStr</div>
<div class="t" style="left:310.00px;width:80px;text-align:center;top:400.19px;font-size:11px;color:#0f4c8c;transform:scaleX(0.95);transform-origin:50% 50%;">24.0 &Omega;</div>
<div class="t" style="left:-54.50px;width:120px;text-align:right;top:418.19px;font-size:11px;color:#262626;transform:scaleX(0.935);transform-origin:100% 50%;">tRFC (ns)</div>
<div class="t" style="left:56.20px;width:80px;text-align:center;top:418.19px;font-size:11px;color:#0f4c8c;transform:scaleX(0.95);transform-origin:50% 50%;">550</div>
<div class="t" style="left:62.50px;width:120px;text-align:right;top:418.19px;font-size:11px;color:#262626;transform:scaleX(0.935);transform-origin:100% 50%;">tCKE</div>
<div class="t" style="left:172.40px;width:80px;text-align:center;top:418.19px;font-size:11px;color:#0f4c8c;transform:scaleX(0.95);transform-origin:50% 50%;">16</div>
<div class="t" style="left:199.00px;width:120px;text-align:right;top:418.19px;font-size:11px;color:#262626;transform:scaleX(0.935);transform-origin:100% 50%;">CsOdtDrvStr</div>
<div class="t" style="left:310.00px;width:80px;text-align:center;top:418.19px;font-size:11px;color:#0f4c8c;transform:scaleX(0.95);transform-origin:50% 50%;">24.0 &Omega;</div>
<div class="t" style="left:-54.50px;width:120px;text-align:right;top:436.19px;font-size:11px;color:#262626;transform:scaleX(0.935);transform-origin:100% 50%;">tRFC</div>
<div class="t" style="left:56.20px;width:80px;text-align:center;top:436.19px;font-size:11px;color:#0f4c8c;transform:scaleX(0.95);transform-origin:50% 50%;">1100</div>
<div class="t" style="left:62.50px;width:120px;text-align:right;top:436.19px;font-size:11px;color:#262626;transform:scaleX(0.935);transform-origin:100% 50%;">tREFI</div>
<div class="t" style="left:172.40px;width:80px;text-align:center;top:436.19px;font-size:11px;color:#0f4c8c;transform:scaleX(0.95);transform-origin:50% 50%;">15600</div>
<div class="t" style="left:199.00px;width:120px;text-align:right;top:436.19px;font-size:11px;color:#262626;transform:scaleX(0.935);transform-origin:100% 50%;">CkeDrvStr</div>
<div class="t" style="left:310.00px;width:80px;text-align:center;top:436.19px;font-size:11px;color:#0f4c8c;transform:scaleX(0.95);transform-origin:50% 50%;">24.0 &Omega;</div>
<div class="t" style="left:-54.50px;width:120px;text-align:right;top:454.19px;font-size:11px;color:#262626;transform:scaleX(0.935);transform-origin:100% 50%;">tRFC2</div>
<div class="t" style="left:56.20px;width:80px;text-align:center;top:454.19px;font-size:11px;color:#0f4c8c;transform:scaleX(0.95);transform-origin:50% 50%;">700</div>
<div class="t" style="left:62.50px;width:120px;text-align:right;top:454.19px;font-size:11px;color:#262626;transform:scaleX(0.935);transform-origin:100% 50%;">tREFI (ns)</div>
<div class="t" style="left:172.40px;width:80px;text-align:center;top:454.19px;font-size:11px;color:#0f4c8c;transform:scaleX(0.95);transform-origin:50% 50%;">7800</div>
<div class="t" style="left:-54.50px;width:120px;text-align:right;top:472.19px;font-size:11px;color:#262626;transform:scaleX(0.935);transform-origin:100% 50%;">tRFC4</div>
<div class="t" style="left:56.20px;width:80px;text-align:center;top:472.19px;font-size:11px;color:#0f4c8c;transform:scaleX(0.95);transform-origin:50% 50%;">520</div>
<div class="t" style="left:62.50px;width:120px;text-align:right;top:472.19px;font-size:11px;color:#262626;transform:scaleX(0.935);transform-origin:100% 50%;">tSTAG</div>
<div class="t" style="left:172.40px;width:80px;text-align:center;top:472.19px;font-size:11px;color:#0f4c8c;transform:scaleX(0.95);transform-origin:50% 50%;">255</div>
<div class="t" style="left:199.00px;width:120px;text-align:right;top:472.19px;font-size:11px;color:#262626;transform:scaleX(0.935);transform-origin:100% 50%;">AddrCmdSetup</div>
<div class="t" style="left:310.00px;width:80px;text-align:center;top:472.19px;font-size:11px;color:#0f4c8c;transform:scaleX(0.95);transform-origin:50% 50%;">0</div>
<div class="t" style="left:-54.50px;width:120px;text-align:right;top:490.19px;font-size:11px;color:#262626;transform:scaleX(0.935);transform-origin:100% 50%;">tMOD</div>
<div class="t" style="left:56.20px;width:80px;text-align:center;top:490.19px;font-size:11px;color:#0f4c8c;transform:scaleX(0.95);transform-origin:50% 50%;">30</div>
<div class="t" style="left:62.50px;width:120px;text-align:right;top:490.19px;font-size:11px;color:#262626;transform:scaleX(0.935);transform-origin:100% 50%;">tMRD</div>
<div class="t" style="left:172.40px;width:80px;text-align:center;top:490.19px;font-size:11px;color:#0f4c8c;transform:scaleX(0.95);transform-origin:50% 50%;">8</div>
<div class="t" style="left:199.00px;width:120px;text-align:right;top:490.19px;font-size:11px;color:#262626;transform:scaleX(0.935);transform-origin:100% 50%;">CsOdtSetup</div>
<div class="t" style="left:310.00px;width:80px;text-align:center;top:490.19px;font-size:11px;color:#0f4c8c;transform:scaleX(0.95);transform-origin:50% 50%;">0</div>
<div class="t" style="left:-54.50px;width:120px;text-align:right;top:508.19px;font-size:11px;color:#262626;transform:scaleX(0.935);transform-origin:100% 50%;">tMODPDA</div>
<div class="t" style="left:56.20px;width:80px;text-align:center;top:508.19px;font-size:11px;color:#0f4c8c;transform:scaleX(0.95);transform-origin:50% 50%;">30</div>
<div class="t" style="left:62.50px;width:120px;text-align:right;top:508.19px;font-size:11px;color:#262626;transform:scaleX(0.935);transform-origin:100% 50%;">tMRDPDA</div>
<div class="t" style="left:172.40px;width:80px;text-align:center;top:508.19px;font-size:11px;color:#0f4c8c;transform:scaleX(0.95);transform-origin:50% 50%;">20</div>
<div class="t" style="left:199.00px;width:120px;text-align:right;top:508.19px;font-size:11px;color:#262626;transform:scaleX(0.935);transform-origin:100% 50%;">CkeSetup</div>
<div class="t" style="left:310.00px;width:80px;text-align:center;top:508.19px;font-size:11px;color:#0f4c8c;transform:scaleX(0.95);transform-origin:50% 50%;">0</div>
<div class="r" style="left:10px;top:534px;width:240px;height:23px;background:#ebebeb;border:1px solid #adadad;box-sizing:border-box;"></div>
<div class="t" style="left:17.80px;top:539.19px;font-size:11px;color:#222;transform:scaleX(0.96);transform-origin:0 50%;">#0: CMH32GX4M2D3600C18</div>
<svg class="r" style="left:237px;top:544px" width="6" height="4"><path d="M0 0H6L3 3Z" fill="#222"/></svg>
</body></html>
